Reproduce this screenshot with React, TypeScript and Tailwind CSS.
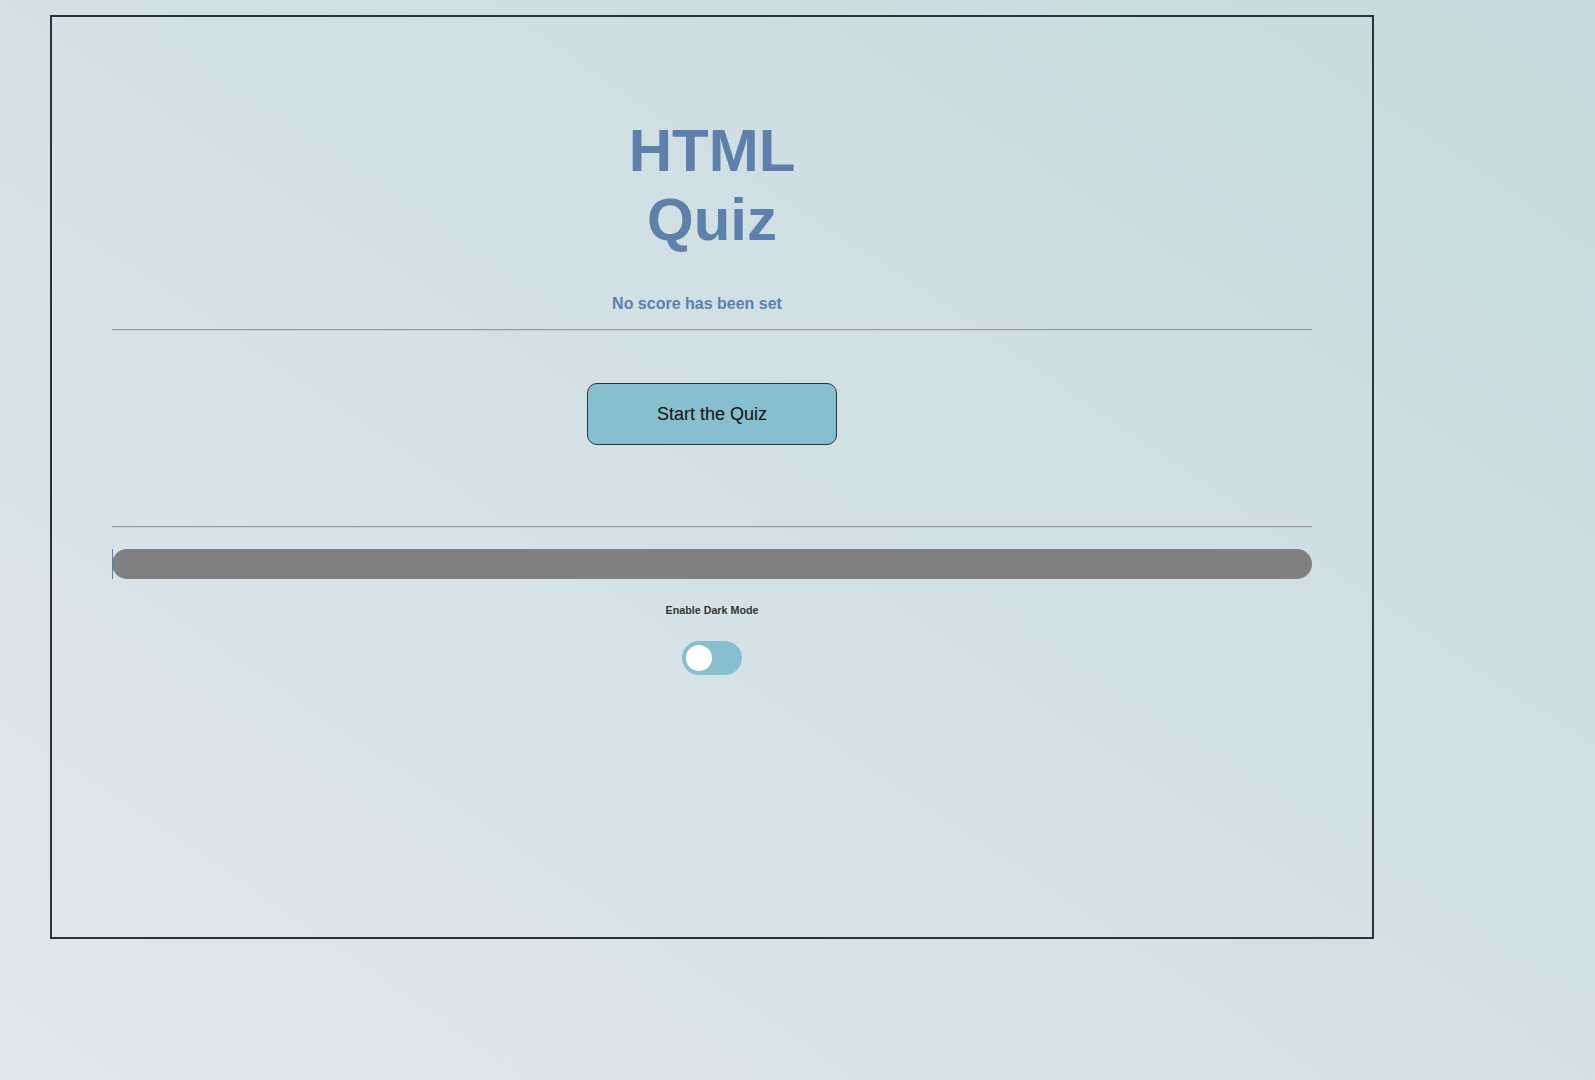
import React from "react";

export default function App() {
  return (
    <div
      className="min-h-screen w-full bg-[linear-gradient(to_top_right,#e0e7ed,#c6dbdf)] pt-[15px] pl-[50px]"
      style={{ fontFamily: '"Liberation Sans", Arial, sans-serif' }}
    >
      <div className="w-[1324px] h-[924px] border-2 border-[#2b323d] px-[60px] flex flex-col">
        <h1 className="mt-[99px] text-center text-[60px] leading-[69px] font-bold text-[#5e80ab]">
          HTML
          <br />
          Quiz
        </h1>
        <p className="mt-[41px] pr-[30px] text-center text-[16px] leading-[18px] font-bold text-[#5e80ab]">
          No score has been set
        </p>
        <div className="mt-[16px] h-[2px] border-t border-[#9a9a9a] border-b border-b-[#c9d1d4]" />
        <div className="mt-[52px] flex justify-center">
          <button className="w-[250px] h-[62px] rounded-[10px] border border-[#2b323d] bg-[#87bfcf] text-[18px] text-[#111]">
            Start the Quiz
          </button>
        </div>
        <div className="mt-[81px] h-[2px] border-t border-[#9a9a9a] border-b border-b-[#c9d1d4]" />
        <div className="relative mt-[21px] h-[30px] rounded-full bg-[#808080]">
          <div className="absolute left-0 top-0 h-[30px] w-px bg-[#5a7fb0]" />
        </div>
        <div className="mt-[25px] text-center text-[10.72px] leading-[12px] font-bold text-[#333]">
          Enable Dark Mode
        </div>
        <div className="mt-[25px] flex justify-center">
          <div className="relative w-[60px] h-[34px] rounded-full bg-[#87bfcf]">
            <div className="absolute left-[4px] top-[4px] w-[26px] h-[26px] rounded-full bg-white" />
          </div>
        </div>
      </div>
    </div>
  );
}
